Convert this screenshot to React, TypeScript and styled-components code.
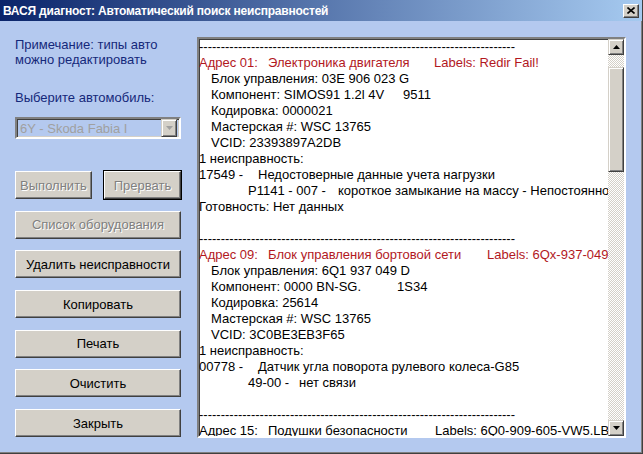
import React from "react";
import styled, { createGlobalStyle } from "styled-components";

const Global = createGlobalStyle`
  html, body { margin: 0; padding: 0; background: #b4c9ef; }
  body { font-family: "Liberation Sans", Arial, sans-serif; }
`;

const Window = styled.div`
  width: 643px;
  height: 454px;
  box-sizing: border-box;
  display: flex;
  flex-direction: column;
  background: #b4c9ef;
  border-right: 1px solid #404040;
  border-bottom: 1px solid #404040;
  box-shadow: inset -1px -1px 0 #808080;
  overflow: hidden;
`;

const TitleBar = styled.div`
  height: 21px;
  flex: none;
  display: flex;
  align-items: center;
  justify-content: space-between;
  padding: 0 3px 0 3px;
  background: linear-gradient(to right, #0a246a, #a6caf0);
  color: #fff;
  font-weight: bold;
  font-size: 12px;
  letter-spacing: -0.2px;
`;

const CloseBtn = styled.div`
  width: 16px;
  height: 14px;
  box-sizing: border-box;
  background: #d4d0c8;
  border: 1px solid;
  border-color: #fff #404040 #404040 #fff;
  box-shadow: inset -1px -1px 0 #808080;
  display: flex;
  align-items: center;
  justify-content: center;
`;

const Body = styled.div`
  flex: 1;
  display: flex;
  padding: 16px 0 0 15px;
  gap: 16px;
`;

const LeftPanel = styled.div`
  width: 166px;
  display: flex;
  flex-direction: column;
`;

const Label = styled.div<{ $mt: number }>`
  color: #14287a;
  font-size: 13px;
  line-height: 15px;
  margin-top: ${(p) => p.$mt}px;
`;

const Combo = styled.div`
  margin-top: 12px;
  height: 22px;
  box-sizing: border-box;
  border: 2px solid;
  border-color: #808080 #fff #fff #808080;
  box-shadow: inset 1px 1px 0 #404040, inset -1px -1px 0 #d4d0c8;
  display: flex;
  align-items: center;
  padding: 0 2px 0 3px;
  font-size: 13px;
  color: #a0a0a0;
`;

const ComboText = styled.span`
  flex: 1;
`;

const DropBtn = styled.div`
  width: 16px;
  height: 18px;
  box-sizing: border-box;
  background: #d4d0c8;
  border: 1px solid;
  border-color: #d4d0c8 #404040 #404040 #d4d0c8;
  box-shadow: inset 1px 1px 0 #fff, inset -1px -1px 0 #808080;
  display: flex;
  align-items: center;
  justify-content: center;
`;

const Buttons = styled.div`
  margin-top: 32px;
  display: flex;
  flex-direction: column;
  gap: 11.7px;
`;

const ButtonRow = styled.div`
  display: flex;
  justify-content: space-between;
`;

const Button = styled.div<{ $disabled?: boolean; $default?: boolean; $w?: number }>`
  width: ${(p) => (p.$w ? `${p.$w}px` : "100%")};
  height: 28px;
  box-sizing: border-box;
  background: #d4d0c8;
  border: 1px solid;
  border-color: #fff #404040 #404040 #fff;
  box-shadow: inset -1px -1px 0 #808080;
  outline: ${(p) => (p.$default ? "1px solid #000" : "none")};
  display: flex;
  align-items: center;
  justify-content: center;
  font-size: 13px;
  color: ${(p) => (p.$disabled ? "#808080" : "#000")};
  text-shadow: ${(p) => (p.$disabled ? "1px 1px 0 #fff" : "none")};
`;

const TextBox = styled.div`
  width: 429px;
  height: 401px;
  box-sizing: border-box;
  border: 2px solid;
  border-color: #808080 #fff #fff #808080;
  box-shadow: inset 1px 1px 0 #404040;
  background: #fff;
  display: flex;
`;

const Content = styled.div`
  flex: 1;
  overflow: hidden;
  font-size: 13px;
  line-height: 16px;
  color: #000;
`;

const Line = styled.div<{ $red?: boolean; $indent?: number }>`
  height: 16px;
  white-space: pre;
  padding-left: ${(p) => p.$indent ?? 0}px;
  color: ${(p) => (p.$red ? "#b2181e" : "#000")};
`;

const Cell = styled.span<{ $w: number }>`
  display: inline-block;
  width: ${(p) => p.$w}px;
`;

const ScrollBar = styled.div`
  width: 16px;
  display: flex;
  flex-direction: column;
`;

const ArrowBtn = styled.div`
  height: 16px;
  flex: none;
  box-sizing: border-box;
  background: #d4d0c8;
  border: 1px solid;
  border-color: #d4d0c8 #404040 #404040 #d4d0c8;
  box-shadow: inset 1px 1px 0 #fff, inset -1px -1px 0 #808080;
  display: flex;
  align-items: center;
  justify-content: center;
`;

const Track = styled.div<{ $h?: number }>`
  flex: ${(p) => (p.$h ? "none" : "1")};
  height: ${(p) => (p.$h ? `${p.$h}px` : "auto")};
  background: repeating-conic-gradient(#d4d0c8 0 25%, #fff 0 50%) 0 0 / 2px 2px;
`;

const Thumb = styled.div`
  height: 105px;
  flex: none;
  box-sizing: border-box;
  background: #d4d0c8;
  border: 1px solid;
  border-color: #d4d0c8 #404040 #404040 #d4d0c8;
  box-shadow: inset 1px 1px 0 #fff, inset -1px -1px 0 #808080;
`;

const Tri = ({ up, color = "#000" }: { up?: boolean; color?: string }) => (
  <svg width="7" height="4" viewBox="0 0 7 4">
    <polygon points={up ? "3.5,0 7,4 0,4" : "0,0 7,0 3.5,4"} fill={color} />
  </svg>
);

const DASHES = "-".repeat(73);

type Seg = { t: string; w?: number };
type L = { segs: Seg[]; red?: boolean; indent?: number };

const lines: L[] = [
  { segs: [{ t: DASHES }] },
  { red: true, segs: [{ t: "Адрес 01:", w: 69 }, { t: "Электроника двигателя", w: 166 }, { t: "Labels: Redir Fail!" }] },
  { indent: 12, segs: [{ t: "Блок управления: 03E 906 023 G" }] },
  { indent: 12, segs: [{ t: "Компонент: SIMOS91 1.2l 4V", w: 192 }, { t: "9511" }] },
  { indent: 12, segs: [{ t: "Кодировка: 0000021" }] },
  { indent: 12, segs: [{ t: "Мастерская #: WSC 13765" }] },
  { indent: 12, segs: [{ t: "VCID: 23393897A2DB" }] },
  { segs: [{ t: "1 неисправность:" }] },
  { segs: [{ t: "17549 -", w: 59 }, { t: "Недостоверные данные учета нагрузки" }] },
  { indent: 49, segs: [{ t: "P1141 - 007 -", w: 90 }, { t: "короткое замыкание на массу - Непостоянно" }] },
  { segs: [{ t: "Готовность: Нет данных" }] },
  { segs: [{ t: "" }] },
  { segs: [{ t: DASHES }] },
  { red: true, segs: [{ t: "Адрес 09:", w: 69 }, { t: "Блок управления бортовой сети", w: 219 }, { t: "Labels: 6Qx-937-049-F.lbl" }] },
  { indent: 12, segs: [{ t: "Блок управления: 6Q1 937 049 D" }] },
  { indent: 12, segs: [{ t: "Компонент: 0000 BN-SG.", w: 186 }, { t: "1S34" }] },
  { indent: 12, segs: [{ t: "Кодировка: 25614" }] },
  { indent: 12, segs: [{ t: "Мастерская #: WSC 13765" }] },
  { indent: 12, segs: [{ t: "VCID: 3C0BE3EB3F65" }] },
  { segs: [{ t: "1 неисправность:" }] },
  { segs: [{ t: "00778 -", w: 59 }, { t: "Датчик угла поворота рулевого колеса-G85" }] },
  { indent: 49, segs: [{ t: "49-00 -", w: 51 }, { t: "нет связи" }] },
  { segs: [{ t: "" }] },
  { segs: [{ t: DASHES }] },
  { segs: [{ t: "Адрес 15:", w: 69 }, { t: "Подушки безопасности", w: 167 }, { t: "Labels: 6Q0-909-605-VW5.LBL" }] },
];

export default function App() {
  return (
    <>
      <Global />
      <Window>
        <TitleBar>
          <span>ВАСЯ диагност: Автоматический поиск неисправностей</span>
          <CloseBtn>
            <svg width="8" height="7" viewBox="0 0 8 7">
              <path d="M0.5 0.5 L7.5 6.5 M7.5 0.5 L0.5 6.5" stroke="#000" strokeWidth="1.6" />
            </svg>
          </CloseBtn>
        </TitleBar>
        <Body>
          <LeftPanel>
            <Label $mt={0}>
              Примечание: типы авто
              <br />
              можно редактировать
            </Label>
            <Label $mt={23}>Выберите автомобиль:</Label>
            <Combo>
              <ComboText>6Y - Skoda Fabia I</ComboText>
              <DropBtn>
                <Tri color="#a0a0a0" />
              </DropBtn>
            </Combo>
            <Buttons>
              <ButtonRow>
                <Button $disabled $w={77}>Выполнить</Button>
                <Button $disabled $default $w={77}>Прервать</Button>
              </ButtonRow>
              <Button $disabled>Список оборудования</Button>
              <Button>Удалить неисправности</Button>
              <Button>Копировать</Button>
              <Button>Печать</Button>
              <Button>Очистить</Button>
              <Button>Закрыть</Button>
            </Buttons>
          </LeftPanel>
          <TextBox>
            <Content>
              {lines.map((l, i) => (
                <Line key={i} $red={l.red} $indent={l.indent}>
                  {l.segs.map((s, j) =>
                    s.w ? (
                      <Cell key={j} $w={s.w}>
                        {s.t}
                      </Cell>
                    ) : (
                      <React.Fragment key={j}>{s.t}</React.Fragment>
                    )
                  )}
                </Line>
              ))}
            </Content>
            <ScrollBar>
              <ArrowBtn>
                <Tri up />
              </ArrowBtn>
              <Track $h={12} />
              <Thumb />
              <Track />
              <ArrowBtn>
                <Tri />
              </ArrowBtn>
            </ScrollBar>
          </TextBox>
        </Body>
      </Window>
    </>
  );
}
